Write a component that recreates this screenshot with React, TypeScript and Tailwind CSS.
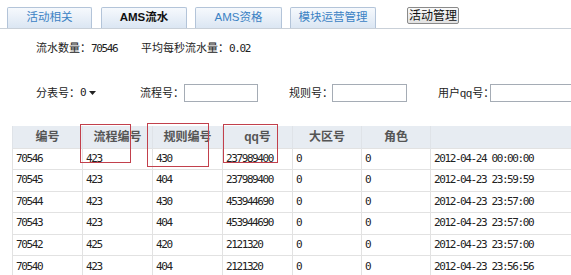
import React from 'react';

const tabs = [
  { label: '活动相关', w: 'w-[85px]', active: false },
  { label: 'AMS流水', w: 'w-[86px]', active: true },
  { label: 'AMS资格', w: 'w-[87px]', active: false },
  { label: '模块运营管理', w: 'w-[86px]', active: false },
];

const rows = [
  ['70546', '423', '430', '237989400', '0', '0', '2012-04-24 00:00:00'],
  ['70545', '423', '404', '237989400', '0', '0', '2012-04-23 23:59:59'],
  ['70544', '423', '430', '453944690', '0', '0', '2012-04-23 23:57:00'],
  ['70543', '423', '404', '453944690', '0', '0', '2012-04-23 23:57:00'],
  ['70542', '425', '420', '2121320', '0', '0', '2012-04-23 23:57:00'],
  ['70540', '423', '404', '2121320', '0', '0', '2012-04-23 23:56:56'],
];

const headers = ['编号', '流程编号', '规则编号', 'qq号', '大区号', '角色', ''];

const font = "font-['Liberation_Sans','Noto_Sans_CJK_SC',sans-serif]";
const num = "font-['DejaVu_Sans_Mono',monospace] text-[11px] tracking-[-1.4px]";

export default function App() {
  return (
    <div className={`relative w-[571px] h-[275px] overflow-hidden bg-white text-[11px] text-[#222] ${font}`}>
      {/* Tabs */}
      <div className="flex items-end h-[29px] pl-[7px] border-b border-[#c9d0d8]">
        {tabs.map((t, i) => (
          <div
            key={t.label}
            className={`${t.w} h-[21px] ${i > 0 ? (i === 1 ? 'ml-[9px]' : 'ml-[8px]') : ''} flex items-center justify-center rounded-t-[2px] border border-b-0 border-[#b3c4d9] bg-gradient-to-b from-[#f6f9fd] to-[#dbe6f3] text-[11.5px] ${t.active ? 'font-bold text-[#111]' : 'text-[#3b82c4]'}`}
          >
            {t.label}
          </div>
        ))}
        <button className="ml-[31px] mb-[4px] w-[52px] h-[17px] flex items-center justify-center rounded-[2px] border border-[#8a8a8a] bg-gradient-to-b from-[#fafafa] to-[#e2e2e2] text-[12px] text-[#111] whitespace-nowrap">
          活动管理
        </button>
      </div>

      {/* Stats */}
      <div className="flex items-center h-[14px] mt-[13px] pl-[36px] whitespace-nowrap">
        <span className="w-[105px]">流水数量：<span className={num}>70546</span></span>
        <span>平均每秒流水量：<span className={num}>0.02</span></span>
      </div>

      {/* Filters */}
      <div className="flex items-center h-[18px] mt-[28px] pl-[36px] whitespace-nowrap">
        <span className="w-[44px] shrink-0">分表号：</span>
        <span className="flex items-center gap-[4px] w-[60px] shrink-0">
          <span className={num}>0</span>
          <svg width="7" height="4" viewBox="0 0 7 4"><path d="M0 0h7L3.5 4z" fill="#222" /></svg>
        </span>
        <span className="w-[44px] shrink-0">流程号：</span>
        <div className="w-[74px] h-[18px] border border-[#a5acb5] shrink-0" />
        <span className="ml-[31px] w-[43px] shrink-0">规则号：</span>
        <div className="w-[75px] h-[18px] border border-[#a5acb5] shrink-0" />
        <span className="ml-[31px] w-[52px] shrink-0">用户qq号：</span>
        <div className="w-[90px] h-[18px] border border-[#a5acb5] shrink-0" />
      </div>

      {/* Table */}
      <div className="mt-[24px] pl-[12px]">
        <table className="table-fixed border-collapse w-[600px]">
          <colgroup>
            <col className="w-[70px]" />
            <col className="w-[70px]" />
            <col className="w-[70px]" />
            <col className="w-[70px]" />
            <col className="w-[69px]" />
            <col className="w-[69px]" />
            <col />
          </colgroup>
          <thead>
            <tr className="h-[22px] bg-[#e7ecf2]">
              {headers.map((h, i) => (
                <th key={i} className="border-l border-[#dfe3e8] text-center font-bold text-[12px] text-[#555]">
                  {h}
                </th>
              ))}
            </tr>
          </thead>
          <tbody>
            {rows.map((r) => (
              <tr key={r[0]} className="h-[21.6px]">
                {r.map((c, j) => (
                  <td key={j} className={`border border-[#e2e2e2] pl-[3px] text-[#222] whitespace-nowrap ${num}`}>
                    {c}
                  </td>
                ))}
              </tr>
            ))}
          </tbody>
        </table>
      </div>

      {/* Annotation boxes */}
      <div className="absolute left-[80px] top-[124px] w-[51px] h-[39px] border-[1.5px] border-[#c2404c]" />
      <div className="absolute left-[147px] top-[123px] w-[62px] h-[44px] border-[1.5px] border-[#c2404c]" />
      <div className="absolute left-[223px] top-[124px] w-[55px] h-[39px] border-[1.5px] border-[#c2404c]" />
    </div>
  );
}
